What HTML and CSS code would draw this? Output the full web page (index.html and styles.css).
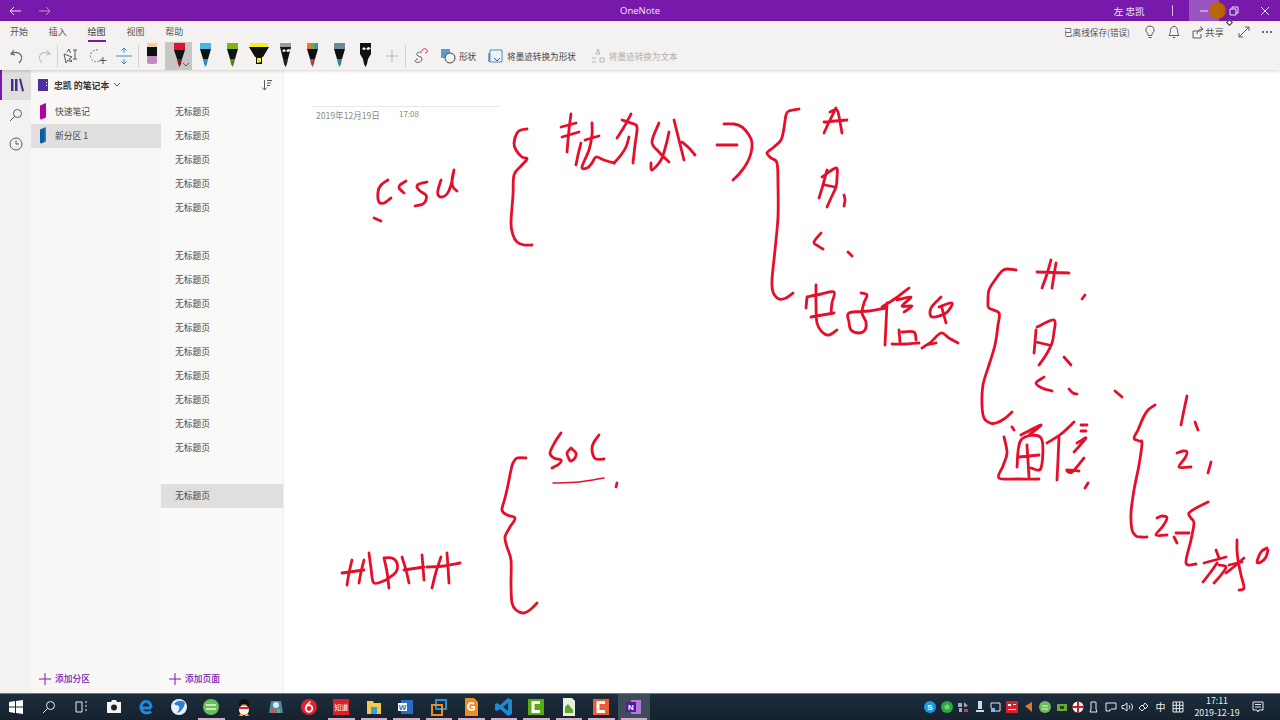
FILE: index.html
```html
<!DOCTYPE html>
<html lang="zh-CN">
<head>
<meta charset="utf-8">
<title>OneNote</title>
<link rel="stylesheet" href="styles.css">
</head>
<body>
<div class="app">
  <header class="titlebar">
    <div class="nav">
      <svg class="ic14" viewBox="0 0 14 14"><path class="wl" d="M13 7H2M6 3L2 7l4 4"/></svg>
      <svg class="ic14 dim" viewBox="0 0 14 14"><path class="wl" d="M1 7h11M8 3l4 4-4 4"/></svg>
    </div>
    <div class="title">OneNote</div>
    <div class="win">
      <span class="user">左 忠凯</span>
      <span class="winsep"></span>
      <span class="winbtn hover"><svg class="ic10" viewBox="0 0 10 10"><path class="wl" d="M1 5h8"/></svg></span>
      <span class="winbtn"><svg class="ic10" viewBox="0 0 10 10"><path class="wl" d="M1 3h6v6H1zM3 3V1h6v6H7"/></svg></span>
      <span class="winbtn"><svg class="ic10" viewBox="0 0 10 10"><path class="wl" d="M1 1l8 8M9 1l-8 8"/></svg></span>
      <span class="cursor"></span>
      <span class="cursor-mini"></span>
    </div>
  </header>

  <div class="ribbon">
    <div class="tabs">
      <span class="tab">开始</span>
      <span class="tab">插入</span>
      <span class="tab active">绘图</span>
      <span class="tab">视图</span>
      <span class="tab">帮助</span>
      <span class="tabfill"></span>
      <span class="save">已离线保存(错误)</span>
      <svg class="ic14 rt1" viewBox="0 0 14 14"><path class="gl" d="M7 1a4 4 0 0 0-2.500 7.200c.5.5.5 1.300.7 2.300h3.600c.2-1 .2-1.800.7-2.300A4 4 0 0 0 7 1zM5.500 12.500h3"/></svg>
      <svg class="ic14 rt2" viewBox="0 0 14 14"><path class="gl" d="M7 1.500c-2.300 0-3.500 1.700-3.500 4 0 2.500-1 4-1.500 5h10c-.5-1-1.500-2.500-1.500-5 0-2.300-1.200-4-3.500-4zM5.700 12.500h2.600"/></svg>
      <svg class="ic14 rt3" viewBox="0 0 14 14"><path class="gl" d="M9 6H2v7h8V9M6 9c0-3 2-5 5-5M9 1.500L12 4 9 6.500"/></svg>
      <span class="share">共享</span>
      <svg class="ic14 rt4" viewBox="0 0 14 14"><path class="gl" d="M2 12L12 2M8 2h4v4M2 8v4h4"/></svg>
      <span class="more"><i></i><i></i><i></i></span>
    </div>
    <div class="tools">
      <span class="slot"><svg class="ic18" viewBox="0 0 18 18"><path class="gl2" d="M6 3L3 7l4 1M3.500 7C6 4.500 10 5 12 7c2.500 2.500 2 6-1 9"/></svg></span>
      <span class="slot"><svg class="ic18" viewBox="0 0 18 18"><path class="ll2" d="M12 3l3 4-4 1M14.500 7C12 4.500 8 5 6 7c-2.500 2.500-2 6 1 9"/></svg></span>
      <span class="sep"></span>
      <span class="slot"><svg class="ic18" viewBox="0 0 18 18"><path class="gl" d="M2 7l2 9 2-3 3 2 1-1-3-2 3-2zM13 3v9M11 3h4M11 12h4M5 5l2-3 1.500 4"/></svg></span>
      <span class="slot"><svg class="ic18" viewBox="0 0 18 18"><path class="dash" d="M9 3a6 6 0 1 0 4 8"/><path class="gl" d="M14 10v7M10.500 13.500h7"/></svg></span>
      <span class="slot"><svg class="ic18" viewBox="0 0 18 18"><path class="bl" d="M1 9h16M9 1v5M9 12v5M6.500 3.500L9 1l2.500 2.500M6.500 14.500L9 17l2.500-2.500"/></svg></span>
      <span class="sep"></span>
      <span class="slot pen"><svg class="pensvg" viewBox="0 0 20 28"><path fill="#f2cfa5" d="M5 1h10v4H5z"/><path fill="#111" d="M5 5h10v9H5z"/><path fill="#c48ac4" d="M5 14h10v6q0 2-2 2H7q-2 0-2-2z"/></svg></span>
      <span class="slot pen selected"><svg class="pensvg" viewBox="0 0 20 28"><path fill="#e3112d" d="M5 1h11v7H5z"/><path fill="#111" d="M5 8h11l-3 9H8z"/><path fill="#7a1826" d="M8 17h5l-1 5-1.500 3L9 22z"/></svg><svg class="chev" viewBox="0 0 8 8"><path class="gl" d="M1 2l3 3 3-3"/></svg></span>
      <span class="slot pen"><svg class="pensvg" viewBox="0 0 20 28"><path fill="#45b9e6" d="M5 1h11v6H5z"/><path fill="#111" d="M5 7h11l-3 10H8z"/><path fill="#2f8fb8" d="M8 17h5l-1 5-1.500 3L9 22z"/></svg></span>
      <span class="slot pen"><svg class="pensvg" viewBox="0 0 20 28"><path fill="#7cb518" d="M5 1h11v6H5z"/><path fill="#111" d="M5 7h11l-3 10H8z"/><path fill="#5e7f1c" d="M8 17h5l-1 5-1.500 3L9 22z"/></svg></span>
      <span class="slot pen"><svg class="pensvg" viewBox="0 0 20 28"><path fill="#f5ee1e" d="M1 1h18v4H1z"/><path fill="#111" d="M0 5h20l-6 10H6z"/><path fill="#111" d="M7 15h6v7l-6 0z"/><path fill="#f5ee1e" d="M8 16h4v4l-4 1z"/></svg></span>
      <span class="slot pen"><svg class="pensvg" viewBox="0 0 20 28"><path fill="#999" d="M5 1h11v4H5z"/><path fill="#111" d="M5 5h11l-3 12H8z"/><path fill="#fff" d="M5 7l2 2 2-2 2 2 2-2 3 1-1 1-2 1-2-1-2 1-2-1z"/><path fill="#222" d="M8 17h5l-1 5-1.500 3L9 22z"/></svg></span>
      <span class="slot pen"><svg class="pensvg" viewBox="0 0 20 28"><path fill="#e27b31" d="M5 1h4v6H5z"/><path fill="#5fa86a" d="M9 1h4v6H9z"/><path fill="#3f8fc4" d="M13 1h3v6h-3z"/><path fill="#111" d="M5 7h11l-3 10H8z"/><path fill="#a0474f" d="M8 17h5l-1 5-1.500 3L9 22z"/></svg></span>
      <span class="slot pen"><svg class="pensvg" viewBox="0 0 20 28"><path fill="#6d8b9a" d="M5 1h11v6H5z"/><path fill="#111" d="M5 7h11l-3 10H8z"/><path fill="#2e8a8a" d="M8 17h5l-1 5-1.500 3L9 22z"/></svg></span>
      <span class="slot pen"><svg class="pensvg" viewBox="0 0 20 28"><path fill="#111" d="M5 1h11v11l-3 5H8l-3-5z"/><path fill="#fff" d="M5 5l2 2 2-2 2 2 2-2 3 1-1 1-2 1-2-1-2 1-2-1z"/><path fill="#111" d="M8 17h5l-1 5-1.500 3L9 22z"/></svg></span>
      <span class="slot pen"><svg class="ic14" viewBox="0 0 14 14"><path class="ll" d="M7 1v12M1 7h12"/></svg></span>
      <span class="sep"></span>
      <span class="slot"><svg class="ic18" viewBox="0 0 18 18"><path class="gl" d="M11 5C7 5 5 6 6 8s5 1 5 4-4 4-6 3 0-3 2-3"/><path class="rl" d="M11 4c1-3 4-3 5-1s-1 3-2 3"/></svg></span>
      <span class="cmd first"><svg class="ic16" viewBox="0 0 16 16"><path fill="#5b9bd5" d="M1 1h9v9H1z"/><circle cx="10" cy="10" r="5" fill="#f3f2f1" stroke="#444"/></svg><span>形状</span></span>
      <span class="cmd second"><svg class="ic16" viewBox="0 0 16 16"><path class="bl" d="M2 2h12v12H2z"/><path class="bl2" d="M1 5v9M6 10l3 3 3-3"/></svg><span>将墨迹转换为形状</span></span>
      <span class="cmd third off"><svg class="ic16" viewBox="0 0 16 16"><path class="ll" d="M8 1l-2 5h4zM2 10h4M2 14h4M10 10h4v4h-4z"/></svg><span>将墨迹转换为文本</span></span>
    </div>
  </div>

  <main class="main">
    <nav class="rail">
      <span class="railbtn on"><svg class="ic14" viewBox="0 0 14 14"><path fill="#4a2a8c" d="M1 1h2.500v12H1zM5 1h2.500v12H5zM9 1l2-.5L14 13l-2 .5z"/></svg></span>
      <span class="railbtn"><svg class="ic14" viewBox="0 0 14 14"><circle class="gl" cx="8.500" cy="5.500" r="4"/><path class="gl" d="M5.500 8.500L1 13"/></svg></span>
      <span class="railbtn"><svg class="ic14" viewBox="0 0 14 14"><circle class="gl" cx="7" cy="7" r="6"/><path class="gl" d="M7 3.500V7h3"/></svg></span>
    </nav>
    <section class="sections">
      <div class="nbhead">
        <svg class="nbicon" viewBox="0 0 10 12"><path fill="#4f2f9e" d="M0 0h10v12H0z"/><path fill="#fff" d="M8 3h1v1H8zM8 6h1v1H8z"/></svg>
        <b>忠凯 的笔记本</b>
        <svg class="chevd" viewBox="0 0 8 8"><path class="gl" d="M1 2l3 3 3-3"/></svg>
      </div>
      <div class="secrow"><span class="sectab mag"></span>快速笔记</div>
      <div class="secrow cur"><span class="sectab blue"></span>新分区 1</div>
      <div class="grow"></div>
      <div class="add"><svg class="ic12" viewBox="0 0 12 12"><path class="pl" d="M6 0v12M0 6h12"/></svg>添加分区</div>
    </section>
    <section class="pages">
      <div class="pghead"><svg class="ic12" viewBox="0 0 12 12"><path class="gl" d="M3.500 1v10M1 8.500L3.500 11 6 8.500M6 1.500h5M6 4h4M6 6.500h3"/></svg></div>
      <div class="pg">无标题页</div>
      <div class="pg">无标题页</div>
      <div class="pg">无标题页</div>
      <div class="pg">无标题页</div>
      <div class="pg">无标题页</div>
      <div class="pg"></div>
      <div class="pg">无标题页</div>
      <div class="pg">无标题页</div>
      <div class="pg">无标题页</div>
      <div class="pg">无标题页</div>
      <div class="pg">无标题页</div>
      <div class="pg">无标题页</div>
      <div class="pg">无标题页</div>
      <div class="pg">无标题页</div>
      <div class="pg">无标题页</div>
      <div class="pg"></div>
      <div class="pg cur">无标题页</div>
      <div class="grow"></div>
      <div class="add"><svg class="ic12" viewBox="0 0 12 12"><path class="pl" d="M6 0v12M0 6h12"/></svg>添加页面</div>
    </section>
    <section class="canvas">
      <div class="pagerule"></div>
      <span class="pdate">2019年12月19日</span>
      <span class="ptime">17:08</span>
      <svg class="ink" viewBox="284 70 996 623">
        <path d="M389 180L382 185 379 192 380 202 385 203 392 198"/>
        <path d="M407 181L401 185 400 188 405 193"/>
        <path d="M428 182L420 184 418 187 421 191 427 195 427 200 424 204 416 206"/>
        <path d="M442 180L439 190 439 195 443 197 448 194 452 185 455 170 453 180 454 187 458 191"/>
        <path d="M375 218L382 221"/>
        <path d="M528 129L522 130 518 133 515 143 517 150 523 157 528 159 522 166 515 175 514 195 512 223 514 235 518 242 525 245 533 245"/>
        <path d="M572 114L570 130 568 152M562 127L577 123M563 137L580 132M582 143L579 155 577 165"/>
        <path d="M593 123L593 135 590 150 583 167 588 168 593 163 597 157 605 160 615 163M586 140L600 136"/>
        <path d="M632 114L625 127 618 138M623 120L632 123 638 127 636 145 634 163M615 163L622 155 627 147 630 137"/>
        <path d="M660 123L653 142 660 152 670 162M670 132L667 145 662 160 653 170 652 163M675 120L680 140 685 160M683 142L690 148 696 155"/>
        <path d="M718 145L738 145M725 124L735 124 743 127 750 135 753 143 752 153 748 163 741 173 734 180"/>
        <path d="M800 109L790 111 787 115 785 128 782 140 775 147 768 153 772 158 778 163 779 185 779 217 776 250 773 280 774 292 780 299 787 298 794 293"/>
        <path d="M837 108L830 122 825 133M831 112L838 110 841 122 843 133M825 122L848 120"/>
        <path d="M828 170L824 185 820 198M823 177L837 168 838 178 837 187 832 198 828 207M826 185L836 187M845 195L846 200 845 206"/>
        <path d="M822 233L815 242 819 246 824 249M849 252L853 256"/>
        <path d="M808 297L807 308M808 297L822 294 835 292 833 303 832 313M812 317L835 313M817 285L817 305 818 323 823 332 830 335 838 330"/>
        <path d="M862 293L868 295 865 303 863 313 867 322 866 330 860 333 852 330 850 322 850 313 870 311 887 308"/>
        <path d="M910 288L897 298 883 307M888 303L887 325 886 345M898 300L912 297 903 306 913 306 905 312M900 330L901 342M903 332L915 332 917 340M893 344L907 344 920 343"/>
        <path d="M942 297L932 308 933 317 947 313 953 303 940 307M943 308L947 323M923 348L932 342 942 333 950 338 959 343M927 345L937 343"/>
        <path d="M1017 270L1008 269 1003 271 996 280 990 290 989 302 990 308 1000 313 999 325 996 345 990 365 984 385 983 405 985 418 991 423 997 423 1005 419 1013 412"/>
        <path d="M1052 260L1048 274 1043 288M1057 263L1055 275 1053 288M1038 272L1070 273M1086 295L1083 299"/>
        <path d="M1037 330L1036 342 1035 353M1038 327L1055 320 1055 332 1053 343 1047 355 1040 365M1037 342L1050 345M1065 357L1072 365"/>
        <path d="M1045 377L1037 383 1043 388 1053 391M1070 389L1074 393 1078 394M1116 391L1123 397"/>
        <path d="M1013 427L1015 430M1005 437L1008 453 1004 466 1000 478 1020 479 1040 479M1022 435L1042 425 1030 435M1018 467L1022 440 1042 438 1042 468 1032 468M1028 445L1030 477M1020 457L1040 455"/>
        <path d="M1075 422L1062 434 1048 443M1060 437L1059 460 1058 480M1082 425L1088 425M1082 431L1087 431M1078 443L1087 438 1075 452M1085 458L1073 472 1068 470 1080 471M1089 483L1086 488"/>
        <path d="M1156 405L1149 410 1144 418 1139 430 1135 438 1140 441 1143 443 1140 465 1135 490 1132 513 1133 530 1137 536 1142 537 1148 537"/>
        <path d="M1188 396L1185 410 1182 425M1196 422L1199 430"/>
        <path d="M1178 453L1184 451 1188 452 1186 458 1180 467 1192 467M1212 462L1209 473"/>
        <path d="M1158 518L1163 516 1168 518 1164 526 1157 535 1168 535M1177 533L1190 533M1175 537L1178 543"/>
        <path d="M1209 502L1199 507 1190 513 1192 518 1195 523 1192 540 1187 563 1197 564"/>
        <path d="M1205 563L1227 557M1217 550L1220 558M1218 563L1211 573 1204 582M1220 565L1227 567 1222 575 1215 583"/>
        <path d="M1238 540L1238 550 1239 560 1242 575 1245 588 1240 590M1227 573L1236 566 1245 558M1230 565L1243 562"/>
        <path d="M1268 548L1262 552 1258 562 1262 562 1267 557 1269 550"/>
        <path d="M527 458L518 458 514 463 512 470 509 485 506 498 503 510 508 515 516 518 511 527 506 537 508 547 512 560 512 585 513 603 517 610 525 613 532 609 538 603"/>
        <path d="M562 433L556 442 551 453 555 458 562 460 560 464 553 468"/>
        <path d="M572 448L568 453 570 459 572 461 576 458 577 453 572 448"/>
        <path d="M600 435L595 442 593 448 594 455 597 459 605 459"/>
        <path class="thin" d="M554 483L580 482 605 478"/>
        <path d="M618 483L617 487"/>
        <path d="M353 560L350 573 348 585M365 560L362 572 360 583M343 573L365 570"/>
        <path d="M370 553L372 568 375 583 387 580M385 558L388 572 390 588M385 558L393 558 398 563 397 572 387 580"/>
        <path d="M403 557L407 570 410 583M423 555L424 567 425 580M405 570L425 567"/>
        <path d="M442 557L437 572 433 588M448 553L449 567 450 583M428 567L445 566 461 563"/>
      </svg>
    </section>
  </main>

  <footer class="taskbar">
    <span class="tb"><svg class="ic14" viewBox="0 0 14 14"><path fill="#fff" d="M0 2l6-1v5.500H0zM7 1l7-1v6.500H7zM0 7.500h6V13l-6-1zM7 7.500h7V14l-7-1z"/></svg></span>
    <span class="tb"><svg class="ic14" viewBox="0 0 14 14"><circle class="wl" cx="8.500" cy="5.500" r="4"/><path class="wl" d="M5.500 8.500L1 13"/></svg></span>
    <span class="tb"><svg class="ic14" viewBox="0 0 14 14"><path class="wl" d="M2 2h6v10H2zM11 2h2M11 6h2M11 10h2"/></svg></span>
    <span class="tb"><svg class="ic16" viewBox="0 0 16 16"><path fill="#f4f4f4" d="M1 3h4l1-2h4l1 2h4v11H1z"/><circle cx="8" cy="8.500" r="3" fill="#222"/></svg></span>
    <span class="tb"><svg class="ic16" viewBox="0 0 16 16"><path fill="none" stroke="#1a8ce0" stroke-width="3" d="M13 9H3c0-4 2-6.500 5-6.500s5 2.500 5 6.500M3.500 9c0 3 2 5 5 5 2 0 3.500-.5 4.500-1.500"/></svg></span>
    <span class="tb"><svg class="ic18" viewBox="0 0 18 18"><circle cx="9" cy="9" r="8" fill="#e8f1f8"/><path fill="#2a7fd4" d="M4 6c3-4 9-4 11-1-1 5-4 9-8 10 2-3 3-5 2-7-2-1-4-1-5-2z"/></svg></span>
    <span class="tb under"><svg class="ic16" viewBox="0 0 16 16"><circle cx="8" cy="8" r="8" fill="#6bbd5b"/><path fill="none" stroke="#e8f5e0" stroke-width="1.500" d="M3 6h10M3 10h10"/></svg></span>
    <span class="tb"><svg class="ic18" viewBox="0 0 18 18"><ellipse cx="9" cy="6.500" rx="5" ry="5.500" fill="#111"/><ellipse cx="9" cy="12" rx="5" ry="5" fill="#f6f6f6"/><path fill="#f5a623" d="M6 6.500h6l-3 2zM5 16h3v2H4zM10 16h3l1 2h-4z"/><path fill="#d8231f" d="M4 9h10v2H4z"/></svg></span>
    <span class="tb"><svg class="ic16" viewBox="0 0 16 16"><path fill="#4a8ba0" d="M3 2h10l2 12H1z"/><circle cx="8" cy="6" r="3" fill="#e0e8e8"/><path fill="#d8534f" d="M4 10h3v4H4z"/><path fill="#6fb36f" d="M9 10h3v4H9z"/></svg></span>
    <span class="tb"><svg class="ic16" viewBox="0 0 16 16"><circle cx="8" cy="8" r="8" fill="#e02230"/><circle cx="8" cy="9.500" r="3.300" fill="none" stroke="#fff" stroke-width="1.800"/><path fill="none" stroke="#fff" stroke-width="1.600" d="M9.500 2.500L5 7"/></svg></span>
    <span class="tb under"><span class="zhi">知道</span></span>
    <span class="tb under"><svg class="ic16" viewBox="0 0 16 16"><path fill="#f4c94f" d="M1 2h6l1 2h7v11H1z"/><path fill="#3d9bd8" d="M5 8h6v7H5z"/></svg></span>
    <span class="tb under"><svg class="ic16" viewBox="0 0 16 16"><path fill="#2b6cc4" d="M3 1h12v14H3z"/><path fill="#fff" d="M0 4h9v8H0z"/><text class="wtxt" x="4.500" y="11">W</text></svg></span>
    <span class="tb under"><svg class="ic18" viewBox="0 0 18 18"><path fill="none" stroke="#2b8fd0" stroke-width="2" d="M6 2h10v9H6z"/><path fill="none" stroke="#ef8c1e" stroke-width="2" d="M2 7h10v10H2z"/></svg></span>
    <span class="tb under"><svg class="ic18" viewBox="0 0 18 18"><path fill="#ef8c22" d="M3 0h9l4 4v14H3z"/><path fill="none" stroke="#fff" stroke-width="2" d="M12 6a3.500 3.500 0 1 0 0 5V9H9"/></svg></span>
    <span class="tb under"><svg class="ic18" viewBox="0 0 18 18"><path fill="#1f8ad2" d="M13 0l4 2v14l-4 2-8-7-3 2-2-1V6l2-1 3 2zM13 5L8 9l5 4z"/></svg></span>
    <span class="tb under"><svg class="ic18" viewBox="0 0 18 18"><path fill="#5aaa16" d="M1 1h16v16H1z"/><path fill="none" stroke="#fff" stroke-width="3" d="M13 4.500H6v9h7"/></svg></span>
    <span class="tb under"><svg class="ic18" viewBox="0 0 18 18"><path fill="#e8f0d8" d="M3 0h9l3 3v15H3z"/><path fill="#5aa53a" d="M5 9l3-3 5 6v3H5z"/></svg></span>
    <span class="tb under"><svg class="ic18" viewBox="0 0 18 18"><path fill="#ee5a33" d="M1 1h16v16H1z"/><path fill="none" stroke="#fff" stroke-width="3" d="M13 4.500H6v9h7"/></svg></span>
    <span class="tb under cur"><svg class="ic16" viewBox="0 0 16 16"><path fill="#b07ad8" d="M5 1h10v14H5z"/><path fill="#5a1a98" d="M0 3h10v10H0z"/><text class="ntxt" x="5" y="11">N</text></svg></span>
    <span class="grow"></span>
    <div class="tray">
      <span class="ti"><svg class="ic12" viewBox="0 0 12 12"><circle cx="6" cy="6" r="6" fill="#1b9ce0"/><text class="stxt" x="6" y="9">S</text></svg></span>
      <span class="ti"><svg class="ic12" viewBox="0 0 12 12"><circle cx="6" cy="6" r="6" fill="#2aa84a"/><circle cx="6" cy="6" r="2.500" fill="#7ad06a"/></svg></span>
      <span class="ti"><svg class="ic12" viewBox="0 0 12 12"><path fill="#aab" d="M1 2h4v4H1zM7 1l4 4-4 1zM2 7h3v4H2z"/><path fill="#d33" d="M7 8h4v3H7z"/></svg></span>
      <span class="ti"><svg class="ic12" viewBox="0 0 12 12"><path fill="#cdd" d="M4 0h4v8H4zM2 9h8v2H2z"/></svg></span>
      <span class="ti"><svg class="ic12" viewBox="0 0 12 12"><path class="wl" d="M1 2h9v8H4M1 2v5"/><path fill="#9ad" d="M1 7h4v4H1z"/></svg></span>
      <span class="ti"><svg class="ic12" viewBox="0 0 12 12"><path fill="#d9202c" d="M0 0h12v12H0z"/><path fill="#fff" d="M2 3h3v2H2zM7 3h3v1H7zM2 8h8v1H2z"/></svg></span>
      <span class="ti"><svg class="ic12" viewBox="0 0 12 12"><path fill="#e0792a" d="M2 5l7-4v10z"/></svg></span>
      <span class="ti"><svg class="ic12" viewBox="0 0 12 12"><circle cx="6" cy="6" r="6" fill="#6bbd5b"/><path stroke="#eee" d="M3 5h6M3 8h6"/></svg></span>
      <span class="ti"><svg class="ic12" viewBox="0 0 12 12"><path fill="#6aa83a" d="M1 3h10v7H1z"/><path fill="#26421a" d="M4 5h4v3H4z"/></svg></span>
      <span class="ti"><svg class="ic12" viewBox="0 0 12 12"><circle cx="6" cy="6" r="5.500" fill="#f4f4f4"/><path fill="#c7202c" d="M5 0h2v12H5zM0 5h12v2H0z"/></svg></span>
      <span class="ti"><svg class="ic12" viewBox="0 0 12 12"><path class="wl" d="M3 1h5v7l1 3H2l1-3z"/></svg></span>
      <span class="ti"><svg class="ic12" viewBox="0 0 12 12"><path class="wl" d="M1 2h10v6H6M1 2v8h4V8"/></svg></span>
      <span class="ti"><svg class="ic12" viewBox="0 0 12 12"><path class="wl" d="M1 4.500h2L6 2v8L3 7.500H1zM8 4c1 1 1 3 0 4M10 2.500c2 2 2 5 0 7"/></svg></span>
      <span class="ti"><svg class="ic12" viewBox="0 0 12 12"><path class="wl" d="M2 7l3-3 3 3-3 3zM6 5l2-3 3 3-3 3"/></svg></span>
      <span class="ti zh">中</span>
      <span class="ti"><svg class="ic12" viewBox="0 0 12 12"><path class="wl" d="M1 1h10v10H1zM4.300 1v10M7.600 1v10M1 4.300h10M1 7.600h10"/></svg></span>
    </div>
    <div class="clock"><span>17:11</span><span>2019-12-19</span></div>
    <span class="notif"><svg class="ic12" viewBox="0 0 12 12"><path class="wl" d="M1 1h10v8H7l-1 2-1-2H1zM3 3.500h6M3 6h6"/></svg></span>
  </footer>
</div>
<script src="ink.js"></script>
</body>
</html>
```
FILE: ink.js
```js
// Turn each recorded ink stroke into a smooth Catmull-Rom curve.
document.querySelectorAll('.ink path').forEach(function (path) {
  var strokes = path.getAttribute('d').split('M').filter(Boolean);
  var out = strokes.map(function (s) {
    var n = s.replace('L', ' ').trim().split(/\s+/).map(Number), p = [];
    for (var i = 0; i < n.length; i += 2) p.push([n[i], n[i + 1]]);
    var d = 'M' + p[0][0] + ' ' + p[0][1];
    for (var k = 0; k < p.length - 1; k++) {
      var a = p[Math.max(k - 1, 0)], b = p[k], c = p[k + 1], e = p[Math.min(k + 2, p.length - 1)];
      d += 'C' + (b[0] + (c[0] - a[0]) / 6) + ' ' + (b[1] + (c[1] - a[1]) / 6) + ' ' +
        (c[0] - (e[0] - b[0]) / 6) + ' ' + (c[1] - (e[1] - b[1]) / 6) + ' ' + c[0] + ' ' + c[1];
    }
    return d;
  });
  path.setAttribute('d', out.join(''));
});
```
FILE: styles.css
```css
* { box-sizing: border-box; }
html, body { margin: 0; height: 100%; overflow: hidden; }
body { font-family: "Noto Sans CJK SC", "Noto Sans", sans-serif; font-size: 8.750px; color: #333; }
.app { display: flex; flex-direction: column; width: 1280px; height: 720px; }
svg { display: block; flex: none; }
.ic10 { width: 10px; height: 10px; }
.ic12 { width: 12px; height: 12px; }
.ic14 { width: 14px; height: 14px; }
.ic16 { width: 16px; height: 16px; }
.ic18 { width: 18px; height: 18px; }
.wl, .gl, .gl2, .ll, .ll2, .bl, .bl2, .rl, .pl, .dash { fill: none; stroke-width: 1; }
.wl { stroke: #e8e8ee; }
.gl { stroke: #5a5a5a; }
.gl2 { stroke: #666; stroke-width: 1.200; }
.ll { stroke: #b5b5b5; }
.ll2 { stroke: #c4c4c4; stroke-width: 1.200; }
.bl { stroke: #3f8fc8; }
.bl2 { stroke: #2b5e8a; }
.rl { stroke: #d42a5a; }
.pl { stroke: #7719aa; }
.dash { stroke: #777; stroke-dasharray: 2 1.500; }
.grow { flex: 1; }

.titlebar { height: 21px; flex: none; background: #7719aa; color: #f1e6f7; display: flex; align-items: center; position: relative; }
.nav { display: flex; gap: 16px; padding-left: 8px; width: 80px; }
.dim { opacity: .6; }
.title { position: absolute; left: 620px; top: 0; line-height: 21px; font-family: "Open Sans", "Noto Sans", sans-serif; font-size: 9.500px; }
.win { margin-left: auto; display: flex; align-items: center; height: 21px; position: relative; }
.user { font-size: 9.500px; margin-right: 27px; }
.winsep { width: 1px; height: 11px; background: #d7b8e6; margin-right: 16px; }
.winbtn { width: 30.500px; height: 21px; display: flex; align-items: center; justify-content: center; }
.winbtn.hover { background: #9a55c0; }
.cursor { position: absolute; left: 95px; top: 2px; width: 17px; height: 17px; border-radius: 50%; background: radial-gradient(circle at 40% 50%, #b9660a 0 55%, #a4470e 100%); }
.cursor-mini { position: absolute; left: 113px; top: 20px; width: 5px; height: 5px; transform: rotate(45deg); background: #fff; border: 1px solid #333; z-index: 3; }

.ribbon { height: 49px; flex: none; background: #f3f2f1; position: relative; z-index: 2; box-shadow: 0 1px 3px rgba(0,0,0,.18); }
.tabs { height: 21px; display: flex; align-items: center; padding-left: 10px; color: #555; font-size: 9px; }
.tab { width: 38.800px; line-height: 21px; position: relative; }
.tab.active { color: #333; }
.tab.active::after { content: ""; position: absolute; left: 0; width: 18px; bottom: 0; height: 2px; background: #7719aa; }
.tabfill { flex: 1; }
.save { font-size: 8.600px; margin-right: 13px; }
.rt1 { margin-right: 10px; }
.rt2 { margin-right: 10px; }
.rt3 { margin-right: 0; }
.share { margin-right: 13px; font-size: 9.500px; }
.rt4 { margin-right: 11px; }
.more { display: flex; gap: 2px; margin-right: 8px; }
.more i { width: 2px; height: 2px; background: #444; border-radius: 50%; }

.tools { height: 28px; display: flex; align-items: center; padding-left: 4px; }
.slot { width: 26.500px; height: 28px; display: flex; align-items: center; justify-content: center; position: relative; flex: none; }
.slot.pen { width: 26.700px; }
.slot.selected { background: #c8c6c4; }
.pensvg { width: 20px; height: 28px; }
.chev { position: absolute; right: 2px; bottom: 1px; width: 8px; height: 8px; }
.sep { width: 1px; height: 22px; background: #d2d0ce; flex: none; }
.cmd { display: flex; align-items: center; gap: 3px; font-size: 8.600px; color: #444; flex: none; }
.cmd.first { margin-left: 7px; }
.cmd.second { margin-left: 12px; }
.cmd.third { margin-left: 14px; color: #b0b0b0; }

.main { flex: 1; min-height: 0; display: flex; }
.rail { width: 31px; flex: none; background: #f3f2f1; display: flex; flex-direction: column; }
.railbtn { height: 29px; display: flex; align-items: center; justify-content: center; }
.railbtn.on { height: 30px; background: #e1dfdd; border-left: 2px solid #7719aa; }
.sections { width: 130px; flex: none; background: #f8f7f6; display: flex; flex-direction: column; }
.nbhead { height: 30px; display: flex; align-items: center; padding-left: 7px; gap: 6px; flex: none; color: #333; }
.nbicon { width: 10px; height: 12px; }
.nbhead b { font-weight: 700; font-size: 8.900px; }
.chevd { width: 8px; height: 8px; margin-left: -2px; }
.secrow { height: 24px; display: flex; align-items: center; padding: 0 0 1px 9px; position: relative; flex: none; color: #444; }
.secrow.cur { background: #e1dfdd; }
.sectab { width: 6px; height: 17px; margin-right: 9px; border-radius: 2px 0 0 2px; clip-path: polygon(0 15%, 100% 0, 100% 85%, 0 100%); }
.mag { background: #b4009e; }
.blue { background: linear-gradient(90deg, #0f5c9e 60%, #2a8fd0); }
.add { height: 29px; flex: none; display: flex; align-items: center; gap: 4px; color: #7719aa; padding-left: 8px; font-weight: 500; }
.pages { width: 122px; flex: none; background: #faf9f8; display: flex; flex-direction: column; }
.pghead { height: 30px; flex: none; display: flex; align-items: center; justify-content: flex-end; padding-right: 10px; }
.pg { height: 24px; flex: none; line-height: 24px; padding-left: 14px; color: #444; }
.pg.cur { background: #e1dfdd; }
.canvas { flex: 1; background: #fff; position: relative; min-width: 0; border-left: 1px solid #f0efee; }
.pagerule { position: absolute; left: 28px; top: 36px; width: 188px; height: 1px; background: #e8e8e8; }
.pdate { position: absolute; left: 32px; top: 39px; color: #8a8a8a; font-size: 8.600px; line-height: 13px; }
.ptime { position: absolute; left: 115px; top: 37px; color: #8a8a8a; font-size: 8px; line-height: 13px; }
.ink { position: absolute; left: -1px; top: 0; width: 996px; height: 623px; fill: none; stroke: #e60f2b; stroke-width: 2.800; stroke-linecap: round; stroke-linejoin: round; }
.ink .thin { stroke-width: 1.500; }

.taskbar { height: 27px; flex: none; background: linear-gradient(#1c2d3c, #16222e); border-top: 1px solid #6f7880; display: flex; align-items: center; color: #eee; }
.tb { width: 32.500px; height: 26px; display: flex; align-items: center; justify-content: center; position: relative; flex: none; }
.tb.under::after { content: ""; position: absolute; left: 3px; right: 3px; bottom: 0; height: 2px; background: #d9a9cf; }
.tb.cur { background: #3f4d59; }
.zhi { width: 16px; height: 16px; background: #d9202c; color: #fff; font-size: 7px; line-height: 16px; text-align: center; }
.wtxt, .ntxt, .stxt { fill: #fff; font-size: 8px; font-weight: 700; text-anchor: middle; font-family: "Liberation Sans", sans-serif; }
.wtxt { fill: #2b6cc4; }
.tray { display: flex; align-items: center; gap: 3.900px; margin-right: 3px; }
.ti { width: 12.500px; height: 12px; display: flex; justify-content: center; flex: none; }
.zh { font-size: 10px; line-height: 12px; width: 14px; }
.clock { display: flex; flex-direction: column; align-items: center; width: 60px; font-size: 8.800px; line-height: 12px; }
.notif { width: 22px; margin: 0 11px 0 0; display: flex; justify-content: center; }
```
